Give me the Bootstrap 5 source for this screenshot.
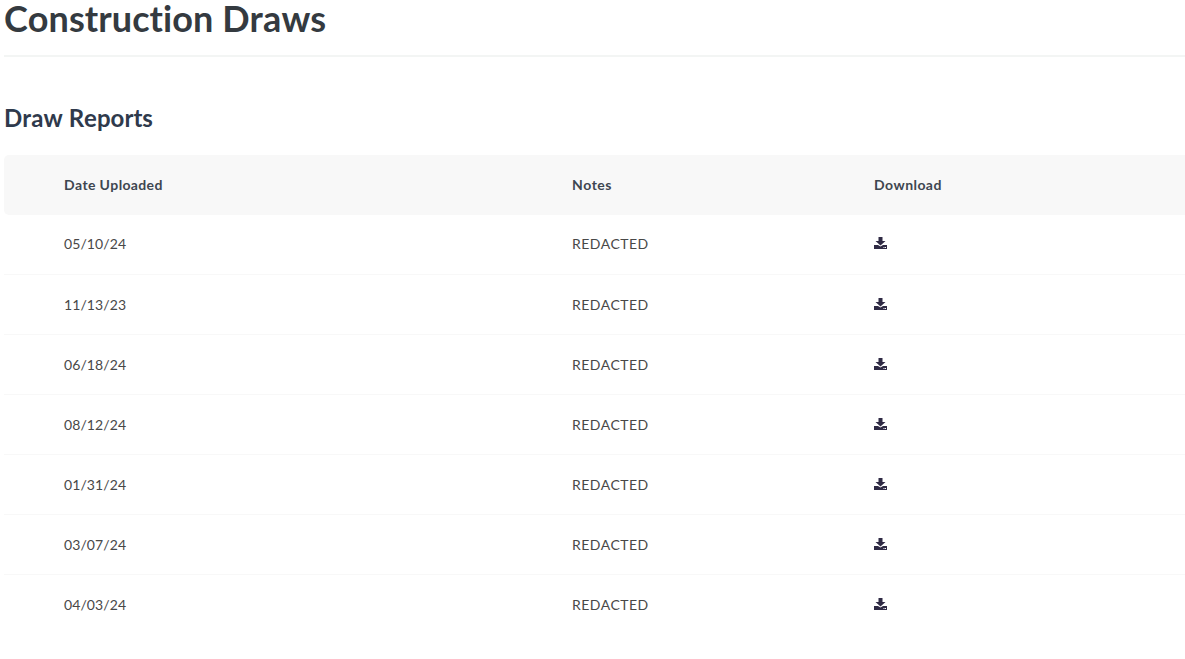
<!DOCTYPE html>
<html lang="en">
<head>
<meta charset="utf-8">
<link href="https://cdn.jsdelivr.net/npm/bootstrap@5.3.0/dist/css/bootstrap.min.css" rel="stylesheet">
<style>
html,body{overflow:hidden;height:659px}
body{font-family:Lato,sans-serif;color:#343a40;background:#fff;padding-left:4px;font-kerning:none;font-variant-ligatures:none}
.pg-title{font-size:36px;font-weight:700;line-height:36px;margin:0;padding-bottom:19px;letter-spacing:.06px;color:#343a40;border-bottom:2px solid #f3f5f4}
.pg-sub{font-size:24px;font-weight:700;line-height:29px;margin:46px 0 23px;letter-spacing:.03px;color:#2f3a4c}
.draw-table{width:100%;margin:0;table-layout:fixed;font-size:14px}
.draw-table th{background:#f8f8f8;border:0;height:60px;padding:0 0 2px;vertical-align:middle;font-weight:700;color:#3e4650;font-size:14px}
.draw-table th.c1{letter-spacing:.35px}
.draw-table th.c2,.draw-table th.c3{letter-spacing:.42px}
.draw-table th:first-child{border-radius:5px 0 0 5px}
.draw-table td{border:0;border-bottom:1px solid #f8f8f8;height:60px;padding:0;vertical-align:middle;color:#484848}
.draw-table tbody tr:first-child td{height:59px;padding-bottom:2px}
.draw-table tr:last-child td{border-bottom:0}
.draw-table .c1{width:568px;padding-left:60px;letter-spacing:.1px}
.draw-table .c2{width:302px}
.draw-table .note-cell{letter-spacing:.4px}
.dl-ico{display:block;width:13px;height:12px}
</style>
</head>
<body>
<h1 class="pg-title">Construction Draws</h1>
<h2 class="pg-sub">Draw Reports</h2>
<table class="table draw-table">
<thead><tr><th class="c1">Date Uploaded</th><th class="c2">Notes</th><th class="c3">Download</th></tr></thead>
<tbody>
<tr><td class="c1">05/10/24</td><td class="note-cell">REDACTED</td><td><svg class="dl-ico" viewBox="0 0 13 12"><path fill="#2f2a44" d="M4.500 0h4v4h3L6.500 8.500 1.500 4h3z"/><path fill="#2f2a44" d="M0 8h4l2.500 1.500L9 8h4v4H0z"/><path fill="#fff" d="M9.500 10h1v1h-1zM11 10h1v1h-1z"/></svg></td></tr>
<tr><td class="c1">11/13/23</td><td class="note-cell">REDACTED</td><td><svg class="dl-ico" viewBox="0 0 13 12"><path fill="#2f2a44" d="M4.500 0h4v4h3L6.500 8.500 1.500 4h3z"/><path fill="#2f2a44" d="M0 8h4l2.500 1.500L9 8h4v4H0z"/><path fill="#fff" d="M9.500 10h1v1h-1zM11 10h1v1h-1z"/></svg></td></tr>
<tr><td class="c1">06/18/24</td><td class="note-cell">REDACTED</td><td><svg class="dl-ico" viewBox="0 0 13 12"><path fill="#2f2a44" d="M4.500 0h4v4h3L6.500 8.500 1.500 4h3z"/><path fill="#2f2a44" d="M0 8h4l2.500 1.500L9 8h4v4H0z"/><path fill="#fff" d="M9.500 10h1v1h-1zM11 10h1v1h-1z"/></svg></td></tr>
<tr><td class="c1">08/12/24</td><td class="note-cell">REDACTED</td><td><svg class="dl-ico" viewBox="0 0 13 12"><path fill="#2f2a44" d="M4.500 0h4v4h3L6.500 8.500 1.500 4h3z"/><path fill="#2f2a44" d="M0 8h4l2.500 1.500L9 8h4v4H0z"/><path fill="#fff" d="M9.500 10h1v1h-1zM11 10h1v1h-1z"/></svg></td></tr>
<tr><td class="c1">01/31/24</td><td class="note-cell">REDACTED</td><td><svg class="dl-ico" viewBox="0 0 13 12"><path fill="#2f2a44" d="M4.500 0h4v4h3L6.500 8.500 1.500 4h3z"/><path fill="#2f2a44" d="M0 8h4l2.500 1.500L9 8h4v4H0z"/><path fill="#fff" d="M9.500 10h1v1h-1zM11 10h1v1h-1z"/></svg></td></tr>
<tr><td class="c1">03/07/24</td><td class="note-cell">REDACTED</td><td><svg class="dl-ico" viewBox="0 0 13 12"><path fill="#2f2a44" d="M4.500 0h4v4h3L6.500 8.500 1.500 4h3z"/><path fill="#2f2a44" d="M0 8h4l2.500 1.500L9 8h4v4H0z"/><path fill="#fff" d="M9.500 10h1v1h-1zM11 10h1v1h-1z"/></svg></td></tr>
<tr><td class="c1">04/03/24</td><td class="note-cell">REDACTED</td><td><svg class="dl-ico" viewBox="0 0 13 12"><path fill="#2f2a44" d="M4.500 0h4v4h3L6.500 8.500 1.500 4h3z"/><path fill="#2f2a44" d="M0 8h4l2.500 1.500L9 8h4v4H0z"/><path fill="#fff" d="M9.500 10h1v1h-1zM11 10h1v1h-1z"/></svg></td></tr>
</tbody>
</table>
<script src="https://cdn.jsdelivr.net/npm/bootstrap@5.3.0/dist/js/bootstrap.bundle.min.js"></script>
</body>
</html>
